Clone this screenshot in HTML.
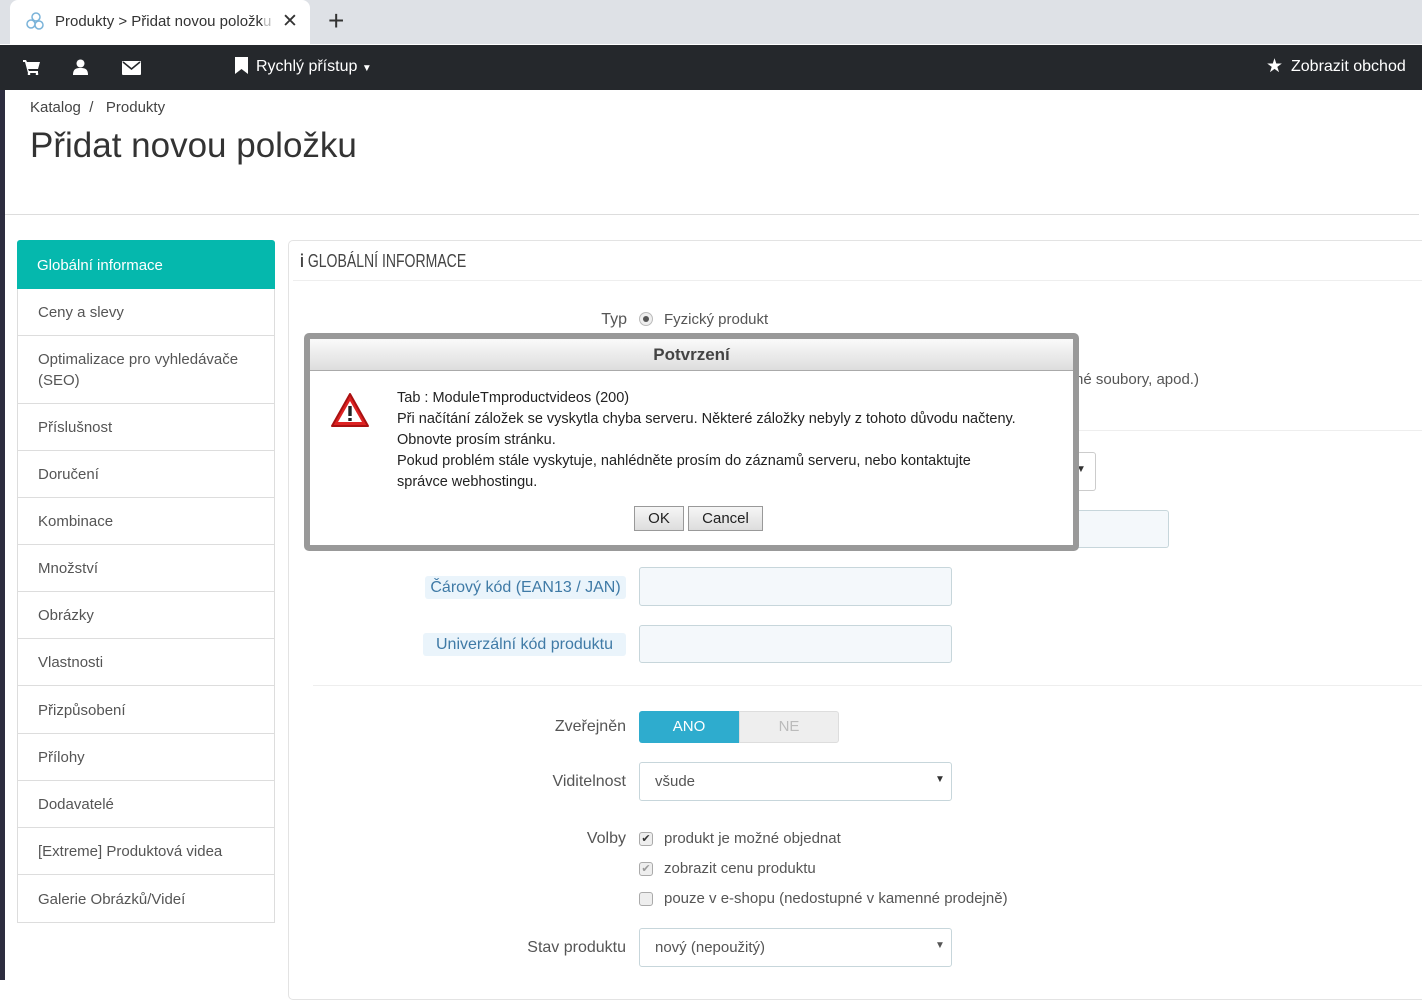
<!DOCTYPE html>
<html><head><meta charset="utf-8"><style>
*{box-sizing:border-box;margin:0;padding:0}
body{width:1422px;height:980px;overflow:hidden;background:#fff;font-family:"Liberation Sans","DejaVu Sans",sans-serif;color:#555;position:relative}
.a{position:absolute}
.tabbar{left:0;top:0;width:1422px;height:44px;background:#dee1e6}
.tab{left:10px;top:0;width:300px;height:44px;background:#fff;border-radius:8px 8px 0 0}
.hdr{left:0;top:45px;width:1422px;height:45px;background:#25282c;color:#fff;font-size:16px}
.strip{left:0;top:90px;width:5px;height:890px;background:#2d2d3f}
.side{left:17px;width:258px;border:1px solid #ddd;border-top:none;font-size:15px;color:#555;padding-left:20px;display:flex;align-items:center;line-height:21px;padding-top:1px}
.lbl{font-size:16px;color:#555;text-align:right}
.inp{background:#f4f8fb;border:1px solid #c7d6db;border-radius:3px}
.sel{background:#fff;border:1px solid #c7d6db;border-radius:3px;font-size:15px;color:#555;padding-left:15px;display:flex;align-items:center}
.cb{width:14px;height:14px;border:1px solid #aaa;border-radius:3px;background:#eee}
</style></head><body>
<div class="a tabbar"></div>
<div class="a tab"></div>
<svg class="a" style="left:25px;top:11px" width="20" height="20" viewBox="0 0 20 20" fill="none" stroke="#7ab3d9" stroke-width="1.5"><circle cx="11" cy="6" r="4"/><circle cx="6" cy="13" r="4"/><circle cx="14" cy="14" r="4"/></svg>
<div class="a" style="left:55px;top:13px;font-size:15px;color:#333;white-space:nowrap">Produkty &gt; Přidat novou položk<span style="color:#bbb">u</span></div>
<div class="a" style="left:282px;top:10px;font-size:19px;color:#333">✕</div>
<div class="a" style="left:328px;top:5px;font-size:28px;color:#333;font-weight:300">+</div>
<div class="a hdr">
 <svg class="a" style="left:23px;top:15px" width="17" height="15" viewBox="0 0 17 15" fill="#fff"><path d="M0 0h3l1 2h13l-2 7H5l1 2h9v2H5L2 2H0z"/><circle cx="6" cy="14" r="1.3"/><circle cx="14" cy="14" r="1.3"/></svg>
 <svg class="a" style="left:73px;top:14px" width="15" height="16" viewBox="0 0 15 16" fill="#fff"><circle cx="7.5" cy="4.5" r="4"/><path d="M0 16c0-6 3-7 7.5-7S15 10 15 16z"/></svg>
 <svg class="a" style="left:122px;top:16px" width="19" height="14" viewBox="0 0 19 14"><rect width="19" height="14" rx="1" fill="#fff"/><path d="M1 1l8.5 7L18 1" stroke="#25282c" stroke-width="1.6" fill="none"/></svg>
 <svg class="a" style="left:235px;top:12px" width="13" height="17" viewBox="0 0 13 17" fill="#fff"><path d="M0 0h13v17l-6.5-5L0 17z"/></svg>
 <div class="a" style="left:256px;top:13px">Rychlý přístup <span style="font-size:10px">▼</span></div>
 <div class="a" style="left:1266px;top:10px;font-size:19px">★</div>
 <div class="a" style="left:1291px;top:13px">Zobrazit obchod</div>
</div>
<div class="a strip"></div>
<div class="a" style="left:30px;top:99px;font-size:15px;color:#444">Katalog &nbsp;/ &nbsp; Produkty</div>
<div class="a" style="left:30px;top:126px;font-size:35px;color:#333;font-weight:300">Přidat novou položku</div>
<div class="a" style="left:5px;top:214px;width:1414px;height:1px;background:#ddd"></div>

<div class="a side" style="top:240px;height:49px;background:#05b8ad;color:#fff;border:none;border-radius:3px 3px 0 0">Globální informace</div>
<div class="a side" style="top:289px;height:47px">Ceny a slevy</div>
<div class="a side" style="top:336px;height:68px">Optimalizace pro vyhledávače<br>(SEO)</div>
<div class="a side" style="top:404px;height:47px">Příslušnost</div>
<div class="a side" style="top:451px;height:47px">Doručení</div>
<div class="a side" style="top:498px;height:47px">Kombinace</div>
<div class="a side" style="top:545px;height:47px">Množství</div>
<div class="a side" style="top:592px;height:47px">Obrázky</div>
<div class="a side" style="top:639px;height:47px">Vlastnosti</div>
<div class="a side" style="top:686px;height:48px">Přizpůsobení</div>
<div class="a side" style="top:734px;height:47px">Přílohy</div>
<div class="a side" style="top:781px;height:47px">Dodavatelé</div>
<div class="a side" style="top:828px;height:47px">[Extreme] Produktová videa</div>
<div class="a side" style="top:875px;height:48px">Galerie Obrázků/Videí</div>

<div class="a" style="left:288px;top:240px;width:1140px;height:760px;border:1px solid #e3e3e3;border-radius:5px"></div>
<div class="a" style="left:300px;top:251px;font-size:18px;color:#444;transform:scaleX(.78);transform-origin:left;white-space:nowrap"><b>i</b> GLOBÁLNÍ INFORMACE</div>
<div class="a" style="left:293px;top:280px;width:1129px;height:1px;background:#eee"></div>

<div class="a lbl" style="left:560px;top:311px;width:67px">Typ</div>
<div class="a" style="left:639px;top:312px;width:14px;height:14px;border-radius:50%;border:1px solid #bbb;background:#eee"><div style="margin:3px;width:6px;height:6px;border-radius:50%;background:#555"></div></div>
<div class="a" style="left:664px;top:311px;font-size:15px">Fyzický produkt</div>
<div class="a" style="left:1075px;top:371px;font-size:15px">né soubory, apod.)</div>
<div class="a" style="left:1075px;top:430px;width:347px;height:1px;background:#eee"></div>
<div class="a" style="left:1060px;top:452px;width:36px;height:39px;border:1px solid #ccc;border-radius:3px;border-left:none"></div>
<div class="a" style="left:1076px;top:464px;font-size:10px;color:#333">▼</div>
<div class="a inp" style="left:1060px;top:510px;width:109px;height:38px;border-left:none"></div>

<div class="a lbl" style="left:425px;top:576px;width:201px;height:23px;background:#eaf4fb;border-radius:3px;color:#3f7aa6;text-align:center;line-height:23px">Čárový kód (EAN13 / JAN)</div>
<div class="a inp" style="left:639px;top:567px;width:313px;height:39px"></div>
<div class="a lbl" style="left:423px;top:633px;width:203px;height:23px;background:#eaf4fb;border-radius:3px;color:#3f7aa6;text-align:center;line-height:23px">Univerzální kód produktu</div>
<div class="a inp" style="left:639px;top:625px;width:313px;height:38px"></div>
<div class="a" style="left:313px;top:685px;width:1109px;height:1px;background:#eee"></div>

<div class="a lbl" style="left:500px;top:718px;width:126px">Zveřejněn</div>
<div class="a" style="left:639px;top:711px;width:100px;height:32px;background:#2eacce;border-radius:3px 0 0 3px;color:#fff;font-size:15px;text-align:center;line-height:32px">ANO</div>
<div class="a" style="left:739px;top:711px;width:100px;height:32px;background:#eee;border:1px solid #ddd;border-radius:0 3px 3px 0;color:#bbb;font-size:15px;text-align:center;line-height:30px">NE</div>

<div class="a lbl" style="left:500px;top:773px;width:126px">Viditelnost</div>
<div class="a sel" style="left:639px;top:762px;width:313px;height:39px">všude</div>
<div class="a" style="left:935px;top:774px;font-size:10px;color:#333">▼</div>

<div class="a lbl" style="left:500px;top:830px;width:126px">Volby</div>
<div class="a cb" style="left:639px;top:832px;color:#333;font-size:11px;line-height:12px;text-align:center">✔</div>
<div class="a" style="left:664px;top:830px;font-size:15px">produkt je možné objednat</div>
<div class="a cb" style="left:639px;top:862px;color:#999;font-size:11px;line-height:12px;text-align:center">✔</div>
<div class="a" style="left:664px;top:860px;font-size:15px">zobrazit cenu produktu</div>
<div class="a cb" style="left:639px;top:892px"></div>
<div class="a" style="left:664px;top:890px;font-size:15px">pouze v e-shopu (nedostupné v kamenné prodejně)</div>

<div class="a lbl" style="left:480px;top:939px;width:146px">Stav produktu</div>
<div class="a sel" style="left:639px;top:928px;width:313px;height:39px">nový (nepoužitý)</div>
<div class="a" style="left:935px;top:940px;font-size:10px;color:#555">▼</div>

<div class="a" style="left:304px;top:333px;width:775px;height:218px;background:#999;border-radius:5px"></div>
<div class="a" style="left:310px;top:339px;width:763px;height:206px;background:#fff"></div>
<div class="a" style="left:310px;top:339px;width:763px;height:32px;background:linear-gradient(#fafafa,#ddd);border-bottom:1px solid #aaa;text-align:center;font-size:17px;font-weight:bold;color:#444;line-height:31px">Potvrzení</div>
<svg class="a" style="left:330px;top:392px" width="40" height="37" viewBox="0 0 40 37"><path d="M20 2L38 34H2z" fill="#d22" stroke="#a11" stroke-width="2" stroke-linejoin="round"/><path d="M20 9L32 30H8z" fill="#fff"/><rect x="18.3" y="14" width="3.4" height="10" fill="#222"/><rect x="18.3" y="26" width="3.4" height="3" fill="#222"/></svg>
<div class="a" style="left:397px;top:388px;font-size:14.5px;color:#222;line-height:21px;white-space:nowrap">Tab : ModuleTmproductvideos (200)<br>Při načítání záložek se vyskytla chyba serveru. Některé záložky nebyly z tohoto důvodu načteny.<br>Obnovte prosím stránku.<br>Pokud problém stále vyskytuje, nahlédněte prosím do záznamů serveru, nebo kontaktujte<br>správce webhostingu.</div>
<div class="a" style="left:634px;top:506px;width:50px;height:25px;border:1px solid #999;background:linear-gradient(#f6f6f6,#ddd);font-size:15px;color:#222;text-align:center;line-height:23px">OK</div>
<div class="a" style="left:688px;top:506px;width:75px;height:25px;border:1px solid #999;background:linear-gradient(#f6f6f6,#ddd);font-size:15px;color:#222;text-align:center;line-height:23px">Cancel</div>
</body></html>
